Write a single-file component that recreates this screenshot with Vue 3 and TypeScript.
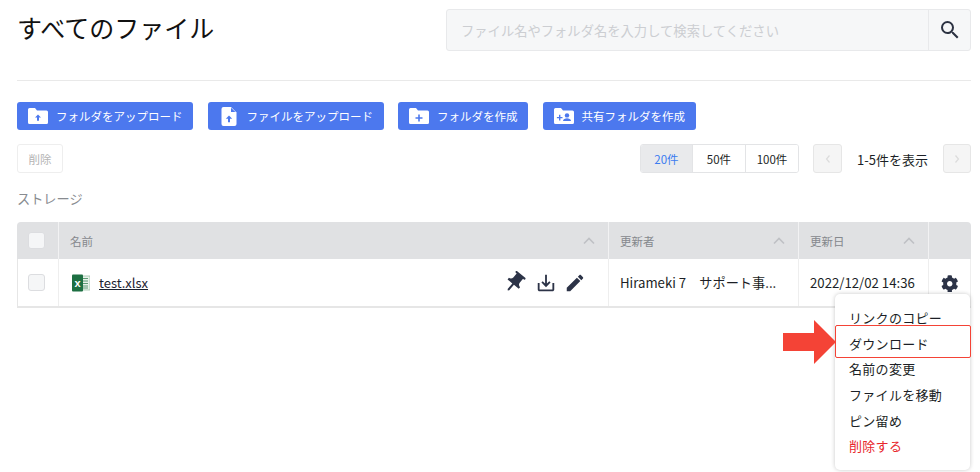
<template>
  <div class="page">
    <header class="top">
      <h1>すべてのファイル</h1>
      <div class="search">
        <input class="search-input" placeholder="ファイル名やフォルダ名を入力して検索してください" />
        <button class="search-btn" aria-label="検索">
          <svg width="24" height="24" viewBox="0 0 24 24"><path :d="icons.search" fill="#2c3242" /></svg>
        </button>
      </div>
    </header>

    <div class="actions">
      <button class="primary">
        <svg class="ic" width="20" height="16" viewBox="0 0 20 16">
          <path :d="icons.folder" fill="#fff" />
          <path d="M10 6.5l3 3h-2v3.2H9V9.5H7z" fill="#4c78ee" />
        </svg>
        フォルダをアップロード
      </button>
      <button class="primary">
        <svg class="ic" width="20" height="19" viewBox="0 0 20 19">
          <path d="M4 0h7.5L17 5.5V17a2 2 0 0 1-2 2H4a2 2 0 0 1-2-2V2a2 2 0 0 1 2-2z" transform="translate(0.5 0)" fill="#fff" />
          <path d="M12 0.8V5h4.4z" fill="#4c78ee" />
          <path d="M10 8.5l3.2 3.2H11v3.6H9v-3.6H6.8z" fill="#4c78ee" />
        </svg>
        ファイルをアップロード
      </button>
      <button class="primary">
        <svg class="ic" width="20" height="16" viewBox="0 0 20 16">
          <path :d="icons.folder" fill="#fff" />
          <path d="M9.2 6.5h1.6v2.7h2.7v1.6h-2.7v2.7H9.2v-2.7H6.5V9.2h2.7z" fill="#4c78ee" />
        </svg>
        フォルダを作成
      </button>
      <button class="primary">
        <svg class="ic" width="20" height="16" viewBox="0 0 20 16">
          <path :d="icons.folder" fill="#fff" />
          <path d="M5 6.8h1.4v2.1h2.1v1.4H6.4v2.1H5v-2.1H2.9V8.9H5z" fill="#4c78ee" />
          <circle cx="13" cy="7.4" r="2.2" fill="#4c78ee" />
          <path d="M9 13c0-1.8 2.4-2.7 4-2.7s4 .9 4 2.7z" fill="#4c78ee" />
        </svg>
        共有フォルダを作成
      </button>
    </div>

    <div class="toolbar">
      <button class="delete" disabled>削除</button>
      <div class="pager">
        <div class="segment">
          <button
            v-for="size in pageSizes"
            :key="size"
            :class="['seg-btn', { active: currentSize === size }]"
            @click="currentSize = size"
          >
            {{ size }}件
          </button>
        </div>
        <button class="page-btn" disabled aria-label="前へ">
          <svg width="8" height="10" viewBox="0 0 8 10"><path d="M5.5 1.5L2.5 5l3 3.5" fill="none" stroke="#dcdcdc" stroke-width="1.2" /></svg>
        </button>
        <span class="range">1-5件を表示</span>
        <button class="page-btn next" disabled aria-label="次へ">
          <svg width="8" height="10" viewBox="0 0 8 10"><path d="M2.5 1.5L5.5 5l-3 3.5" fill="none" stroke="#dcdcdc" stroke-width="1.2" /></svg>
        </button>
      </div>
    </div>

    <div class="section-label">ストレージ</div>

    <div class="table">
      <div class="row head">
        <div class="cell check"><span class="box"></span></div>
        <div v-for="col in columns" :key="col" class="cell th">
          <span>{{ col }}</span>
          <svg width="12" height="8" viewBox="0 0 12 8"><path d="M1 6.5l5-5 5 5" fill="none" stroke="#bfc1c5" stroke-width="1.6" /></svg>
        </div>
        <div class="cell"></div>
      </div>
      <div class="row body">
        <div class="cell check"><span class="box"></span></div>
        <div class="cell name">
          <svg class="xls" width="18" height="18" viewBox="0 0 18 18">
            <rect x="6" y="2" width="12" height="14" fill="#e8f1ea" stroke="#9cc2a8" stroke-width="0.8" />
            <path d="M11 4.5h5M11 7h5M11 9.5h5M11 12h5M11 14h5" stroke="#5d9a74" stroke-width="1" />
            <rect x="0" y="0.5" width="11" height="17" rx="1" fill="#1d6f42" />
            <text x="2.4" y="12.6" class="xls-x">x</text>
          </svg>
          <a class="file-link">test.xlsx</a>
          <span class="row-tools">
            <svg class="pin" width="25" height="25" viewBox="0 0 24 24"><path :d="icons.pin" fill="#2c3347" transform="rotate(40 12 12)" /></svg>
            <svg width="22" height="22" viewBox="0 0 24 24"><path :d="icons.save" fill="#2c3347" /></svg>
            <svg width="22" height="22" viewBox="0 0 24 24"><path :d="icons.edit" fill="#2c3347" /></svg>
          </span>
        </div>
        <div class="cell text">Hirameki 7　サポート事...</div>
        <div class="cell text">2022/12/02 14:36</div>
        <div class="cell gear">
          <svg width="17.5" height="17.5" viewBox="0 0 512 512"><path :d="icons.cog" fill="#2c3347" /></svg>
        </div>
      </div>
    </div>

    <ul class="menu">
      <li v-for="item in menuItems" :key="item" :class="{ danger: item === '削除する', hot: item === 'ダウンロード' }">{{ item }}</li>
    </ul>
    <svg class="arrow" width="53" height="44" viewBox="0 0 53 44">
      <path d="M0 13h31V0l22 22-22 22V31H0z" fill="#f44336" />
    </svg>
  </div>
</template>

<script setup lang="ts">
import { ref } from 'vue'

const pageSizes = [20, 50, 100]
const currentSize = ref(20)
const columns = ['名前', '更新者', '更新日']
const menuItems = ['リンクのコピー', 'ダウンロード', '名前の変更', 'ファイルを移動', 'ピン留め', '削除する']

const icons = {
  search: 'M15.5 14h-.79l-.28-.27A6.471 6.471 0 0 0 16 9.5 6.5 6.5 0 1 0 9.5 16c1.61 0 3.09-.59 4.23-1.57l.27.28v.79l5 4.99L20.49 19l-4.99-5zm-6 0C7.01 14 5 11.99 5 9.5S7.01 5 9.5 5 14 7.01 14 9.5 11.99 14 9.5 14z',
  folder: 'M1.5 0H7l2 2.5h9.5A1.5 1.5 0 0 1 20 4v10.5a1.5 1.5 0 0 1-1.5 1.5h-17A1.5 1.5 0 0 1 0 14.5V1.5A1.5 1.5 0 0 1 1.5 0z',
  pin: 'M16 9V4h1c.55 0 1-.45 1-1s-.45-1-1-1H7c-.55 0-1 .45-1 1s.45 1 1 1h1v5c0 1.66-1.34 3-3 3v2h5.97v7l1 1 1-1v-7H19v-2c-1.66 0-3-1.34-3-3z',
  save: 'M19 12v7H5v-7H3v7c0 1.1.9 2 2 2h14c1.1 0 2-.9 2-2v-7h-2zm-6 .67l2.59-2.58L17 11.5l-5 5-5-5 1.41-1.41L11 12.67V3h2z',
  edit: 'M3 17.25V21h3.75L17.81 9.94l-3.75-3.75L3 17.25zM20.71 7.04c.39-.39.39-1.02 0-1.41l-2.34-2.34c-.39-.39-1.02-.39-1.41 0l-1.83 1.83 3.75 3.75 1.83-1.83z',
  cog: 'M487.4 315.7l-42.6-24.6c4.3-23.2 4.3-47 0-70.2l42.6-24.6c4.9-2.8 7.1-8.6 5.5-14-11.1-35.6-30-67.8-54.7-94.6-3.8-4.1-10-5.1-14.8-2.3L380.8 110c-17.9-15.4-38.5-27.3-60.8-35.1V25.8c0-5.6-3.9-10.5-9.4-11.7-36.7-8.2-74.3-7.8-109.2 0-5.5 1.2-9.4 6.1-9.4 11.7V75c-22.2 7.9-42.8 19.8-60.8 35.1L88.7 85.5c-4.9-2.8-11-1.9-14.8 2.3-24.7 26.7-43.6 58.9-54.7 94.6-1.7 5.4.6 11.2 5.5 14L67.3 221c-4.3 23.2-4.3 47 0 70.2l-42.6 24.6c-4.9 2.8-7.1 8.6-5.5 14 11.1 35.6 30 67.8 54.7 94.6 3.8 4.1 10 5.1 14.8 2.3l42.6-24.6c17.9 15.4 38.5 27.3 60.8 35.1v49.2c0 5.6 3.9 10.5 9.4 11.7 36.7 8.2 74.3 7.8 109.2 0 5.5-1.2 9.4-6.1 9.4-11.7v-49.2c22.2-7.9 42.8-19.8 60.8-35.1l42.6 24.6c4.9 2.8 11 1.9 14.8-2.3 24.7-26.7 43.6-58.9 54.7-94.6 1.5-5.5-.7-11.3-5.6-14.1zM256 336c-44.1 0-80-35.9-80-80s35.9-80 80-80 80 35.9 80 80-35.9 80-80 80z',
}
</script>

<style>
html, body { background: #fff; overflow: hidden; }
</style>

<style scoped>
.page {
  position: relative;
  box-sizing: border-box;
  width: 980px;
  height: 472px;
  padding: 9px 9px 0 17px;
  overflow: hidden;
  font-family: "Noto Sans CJK JP", "Noto Sans", sans-serif;
  color: #1c1f26;
}

button {
  font-family: inherit;
  padding: 0;
  margin: 0;
}

.top {
  display: flex;
  justify-content: space-between;
  align-items: flex-start;
  height: 71px;
  border-bottom: 1px solid #e9e9e9;
}

h1 {
  margin: 0;
  font-size: 25px;
  line-height: 36px;
  font-weight: 400;
  color: #111;
}

.search {
  display: flex;
  width: 525px;
  height: 42px;
  box-sizing: border-box;
  border: 1px solid #e8e9eb;
  border-radius: 3px;
  background: #f6f7f8;
}

.search-input {
  flex: 1;
  border: none;
  outline: none;
  background: transparent;
  padding: 0 14px;
  font-family: inherit;
  font-size: 13.3px;
}

.search-input::placeholder {
  color: #ccced2;
  opacity: 1;
}

.search-btn {
  width: 42px;
  border: none;
  border-left: 1px solid #e8e9eb;
  background: transparent;
  display: flex;
  align-items: center;
  justify-content: center;
}

.actions {
  display: flex;
  gap: 14.5px;
  margin-top: 21px;
}

.primary {
  display: flex;
  align-items: center;
  gap: 8px;
  height: 28px;
  padding: 0 10.5px 0 11px;
  border: none;
  border-radius: 3px;
  background: #4c78ee;
  color: #fff;
  font-size: 11.5px;
  white-space: nowrap;
}

.ic { flex: none; }

.toolbar {
  display: flex;
  justify-content: space-between;
  margin-top: 14px;
  height: 29px;
}

.delete {
  width: 46px;
  box-sizing: border-box;
  border: 1px solid #eeeeee;
  border-radius: 3px;
  background: #fff;
  color: #b4b4b4;
  font-size: 11.5px;
}

.pager {
  display: flex;
  align-items: stretch;
}

.segment {
  display: grid;
  grid-template-columns: 51px 53px 1fr;
  width: 159px;
  box-sizing: border-box;
  border: 1px solid #e3e4e6;
  border-radius: 3px;
  overflow: hidden;
}

.seg-btn {
  border: none;
  border-left: 1px solid #e3e4e6;
  background: #fff;
  font-size: 11.5px;
  color: #1c1f26;
}

.seg-btn:first-child { border-left: none; }
.seg-btn.active { background: #e9eaec; color: #3b7cf0; }

.page-btn {
  width: 29px;
  box-sizing: border-box;
  margin-left: 14px;
  border: 1px solid #e6e6e6;
  border-radius: 3px;
  background: #f5f5f5;
  display: flex;
  align-items: center;
  justify-content: center;
}

.page-btn.next { width: 28px; }

.range {
  margin-left: 15px;
  margin-right: 1px;
  width: 71px;
  line-height: 31px;
  font-size: 13px;
  white-space: nowrap;
}

.section-label {
  margin-top: 15px;
  font-size: 13.2px;
  line-height: 22px;
  color: #888b90;
}

.table {
  margin-top: 12px;
  border-radius: 4px 4px 0 0;
  overflow: hidden;
  border-bottom: 2px solid #e6e6e6;
}

.row {
  display: grid;
  grid-template-columns: 41px 550px 190px 130px 43px;
}

.row.head {
  height: 37px;
  background: #e0e1e3;
}

.row.body {
  height: 47px;
}

.cell {
  display: flex;
  align-items: center;
  box-sizing: border-box;
  border-left: 1px solid #eeeeee;
  font-size: 12px;
}

.cell:first-child { border-left-color: #e6e6e6; }
.row.head .cell { border-left-color: #f2f2f3; }
.row.head .cell:first-child { border-left: none; }
.row.body .cell:last-child { border-right: 1px solid #eeeeee; }

.check { justify-content: center; padding-right: 3px; }

.box {
  width: 15px;
  height: 15px;
  border: 1px solid #dcdde0;
  border-radius: 3px;
  background: #f5f6f7;
}

.th {
  justify-content: space-between;
  padding: 0 13px 0 11px;
  font-size: 11.5px;
  color: #85888d;
}

.name { padding: 0 22px 0 13px; }

.xls { flex: none; }

.xls-x {
  font-family: "Liberation Sans", sans-serif;
  font-size: 11px;
  font-weight: 700;
  fill: #fff;
}

.file-link {
  margin-left: 9px;
  font-size: 13px;
  color: #1c2230;
  text-decoration: underline;
}

.row-tools {
  display: flex;
  align-items: center;
  gap: 7px;
  margin-left: auto;
}

.pin { margin-right: 1px; }

.text {
  padding-left: 11px;
  font-size: 13.2px;
  white-space: nowrap;
}

.gear { justify-content: center; padding-top: 2px; }

.menu {
  position: absolute;
  left: 835px;
  top: 294px;
  width: 135px;
  height: 176px;
  box-sizing: border-box;
  margin: 0;
  padding: 11px 0 0;
  list-style: none;
  background: #fff;
  border-radius: 5px;
  box-shadow: 0 0 4px rgba(0, 0, 0, 0.22);
  font-size: 13px;
  letter-spacing: 0.3px;
}

.menu li {
  height: 25.7px;
  line-height: 25.7px;
  padding-left: 14px;
}

.menu li.danger { color: #e8262c; }

.menu li.hot {
  position: relative;
  z-index: 1;
}

.menu li.hot::after {
  content: "";
  position: absolute;
  left: 0;
  right: -1px;
  top: -6px;
  height: 33px;
  box-sizing: border-box;
  border: 1px solid #f44336;
  border-radius: 2px;
}

.arrow {
  position: absolute;
  left: 783px;
  top: 320px;
}
</style>
